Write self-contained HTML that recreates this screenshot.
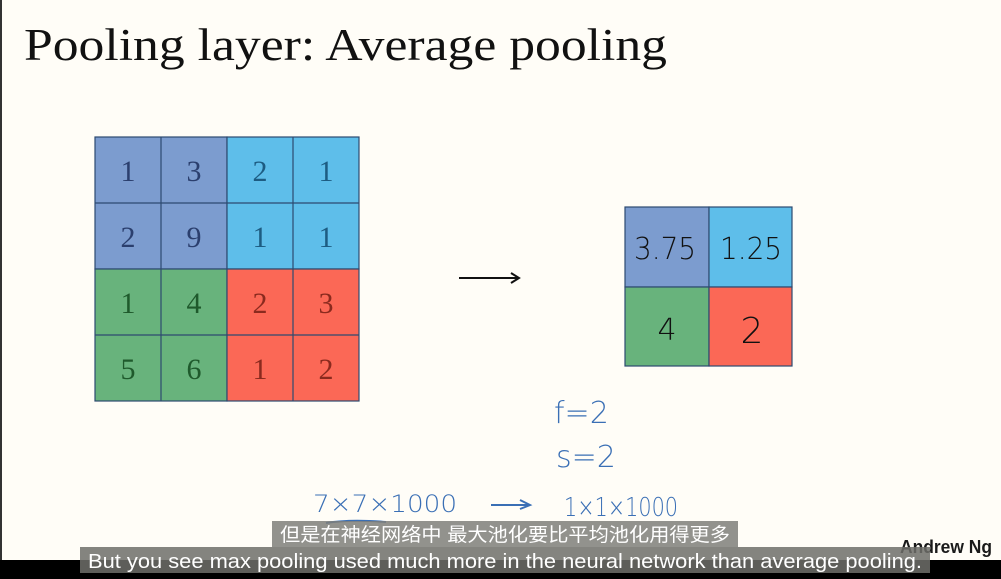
<!DOCTYPE html>
<html><head><meta charset="utf-8"><style>
html,body{margin:0;padding:0;background:#fffdf7;}
svg{display:block}
</style></head><body>
<svg width="1001" height="579" viewBox="0 0 1001 579" xmlns="http://www.w3.org/2000/svg">
<rect width="1001" height="579" fill="#fffdf7"/>
<rect x="0" y="0" width="2" height="560" fill="#333"/>
<text x="24" y="60" font-family="Liberation Serif, serif" font-size="45" fill="#111" textLength="643" lengthAdjust="spacingAndGlyphs">Pooling layer: Average pooling</text>

<g stroke="#2d4a70" stroke-width="1.2">
<rect x="95" y="137" width="132" height="132" fill="#7c9ccf"/>
<rect x="227" y="137" width="132" height="132" fill="#5ebeea"/>
<rect x="95" y="269" width="132" height="132" fill="#68b37c"/>
<rect x="227" y="269" width="132" height="132" fill="#fb6856"/>
<line x1="161" y1="137" x2="161" y2="401"/><line x1="293" y1="137" x2="293" y2="401"/>
<line x1="95" y1="203" x2="359" y2="203"/><line x1="95" y1="335" x2="359" y2="335"/>
</g>
<g font-family="Liberation Serif, serif" font-size="30" text-anchor="middle">
<g fill="#2b3f6e"><text x="128" y="181">1</text><text x="194" y="181">3</text><text x="128" y="247">2</text><text x="194" y="247">9</text></g>
<g fill="#1d5c82"><text x="260" y="181">2</text><text x="326" y="181">1</text><text x="260" y="247">1</text><text x="326" y="247">1</text></g>
<g fill="#1f5a2c"><text x="128" y="313">1</text><text x="194" y="313">4</text><text x="128" y="379">5</text><text x="194" y="379">6</text></g>
<g fill="#8a2a1e"><text x="260" y="313">2</text><text x="326" y="313">3</text><text x="260" y="379">1</text><text x="326" y="379">2</text></g>
</g>

<line x1="459" y1="278" x2="518" y2="278" stroke="#111" stroke-width="2"/>
<path d="M511 273 L519 278 L511 283" fill="none" stroke="#111" stroke-width="2"/>

<g stroke="#2d4a70" stroke-width="1.2">
<rect x="625" y="207" width="84" height="80" fill="#7c9ccf"/>
<rect x="709" y="207" width="83" height="80" fill="#5ebeea"/>
<rect x="625" y="287" width="84" height="79" fill="#68b37c"/>
<rect x="709" y="287" width="83" height="79" fill="#fb6856"/>
</g>
<g font-family="DejaVu Sans, sans-serif" font-size="30" fill="#111" text-anchor="middle" font-weight="200">
<text x="665" y="259" textLength="62" lengthAdjust="spacingAndGlyphs">3.75</text>
<text x="751" y="259" textLength="62" lengthAdjust="spacingAndGlyphs">1.25</text>
<text x="667" y="340">4</text>
<text x="752" y="343" font-size="36">2</text>
</g>

<g font-family="DejaVu Sans, sans-serif" fill="#3a6fb5" font-weight="200">
<text x="554" y="423" font-size="30">f=2</text>
<text x="556" y="467" font-size="30">s=2</text>
<text x="313" y="512" font-size="24" textLength="144" lengthAdjust="spacingAndGlyphs">7×7×1000</text>
<text x="564" y="516" font-size="26" textLength="114" lengthAdjust="spacingAndGlyphs">1×1×1000</text>
</g>
<path d="M491 505 L529 505 M520 500 L530 505 L520 509" stroke="#3a6fb5" stroke-width="2" fill="none"/>
<path d="M326 523 Q350 519 386 522" stroke="#3a6fb5" stroke-width="2" fill="none"/>

<text x="900" y="553" font-family="Liberation Sans, sans-serif" font-size="18" font-weight="bold" fill="#1a1a1a" textLength="92" lengthAdjust="spacingAndGlyphs">Andrew Ng</text>

<rect x="0" y="560" width="1001" height="19" fill="#000"/>

<rect x="272" y="521" width="466" height="26" fill="#7f7f7a" fill-opacity="0.85"/>
<text x="505" y="541" text-anchor="middle" font-family="Liberation Sans, Noto Sans CJK SC, sans-serif" font-size="19" fill="#fff" textLength="450" lengthAdjust="spacingAndGlyphs">但是在神经网络中 最大池化要比平均池化用得更多</text>
<rect x="80" y="547" width="850" height="26" fill="#6e6e6a" fill-opacity="0.85"/>
<text x="505" y="568" text-anchor="middle" font-family="Liberation Sans, sans-serif" font-size="20" fill="#fff" textLength="834" lengthAdjust="spacingAndGlyphs">But you see max pooling used much more in the neural network than average pooling.</text>
</svg>
</body></html>
